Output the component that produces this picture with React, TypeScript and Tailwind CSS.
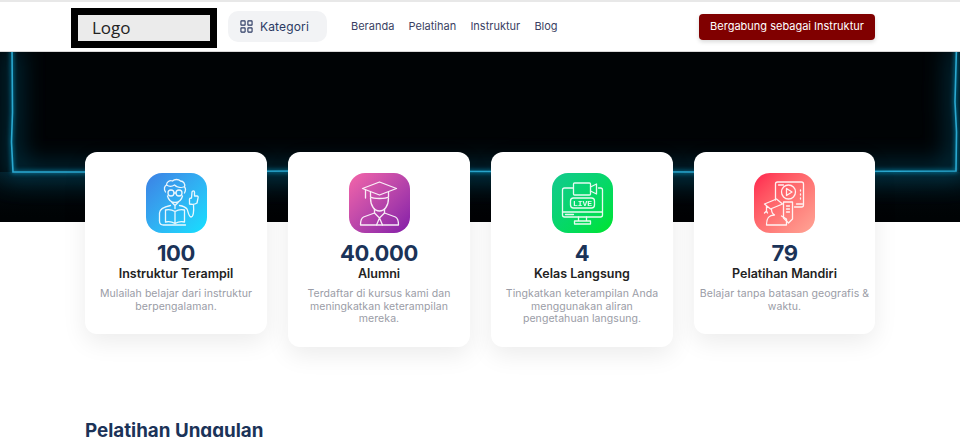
import React from "react";

const font = { fontFamily: "Inter, 'Open Sans', sans-serif" };

function Teacher() {
  return (
    <svg viewBox="0 0 60 60" className="w-[61px] h-[60px] opacity-90" fill="none" stroke="white" strokeWidth="1.3" strokeLinecap="round" strokeLinejoin="round">
      <path d="M19 19c-2-3-1-6 1-7 0-3 3-5 6-4 2-2 6-2 8 0 3 0 5 3 4 6 2 2 1 4 0 6" />
      <path d="M20 12c3 2 5 2 8 0 2 2 6 3 9 2" />
      <circle cx="24.500" cy="20" r="3" />
      <circle cx="32.500" cy="20" r="3" />
      <path d="M27.500 20h2M21 23c1 4 4 6.500 7.500 6.500s6.500-2.500 7.500-6.500" />
      <path d="M25.500 29.500l3 3 3-3M28.500 32.500v3" />
      <path d="M13 48v-8c0-4 4-6 11-7.500M33 32.500c3 .5 6 1.500 7.500 3.500 1 1.500 1.500 8 4 8 2.500 0 3-6 2.500-12" />
      <path d="M19 37c4-1 7 0 9.500 1.500 2.500-1.500 5.500-2.500 9.500-1.500v12c-4-1-7 0-9.500 1.500-2.500-1.500-5.500-2.500-9.500-1.500zM28.500 38.500v12" />
      <path d="M13 48c0 3 1 4 4 4h22" />
      <path d="M43 31v-5c0-1 1-1 2-1l.5-6c.3-1.500 2.500-1.500 2.500 0v4h2.500c1 0 1.500 1 1 2l-1 5c-2 1.500-5 1.500-7.500 1z" />
    </svg>
  );
}

function Graduate() {
  return (
    <svg viewBox="0 0 60 60" className="w-[61px] h-[60px] opacity-90" fill="none" stroke="white" strokeWidth="1.3" strokeLinecap="round" strokeLinejoin="round">
      <path d="M30 9l17 6.500-17 6.500-17-6.500z" />
      <path d="M21 19v5c3 2 15 2 18 0v-5" />
      <path d="M16 17v8" />
      <path d="M21 25c0 8 4 13 9 13s9-5 9-13" />
      <path d="M25 36v4l-11 4c-2 1-3 3-3 8h38c0-5-1-7-3-8l-11-4v-4" />
      <path d="M25 40l5 5 5-5M27 52l3-7 3 7" />
    </svg>
  );
}

function Live() {
  return (
    <svg viewBox="0 0 60 60" className="w-[61px] h-[60px] opacity-90" fill="none" stroke="white" strokeWidth="1.3" strokeLinecap="round" strokeLinejoin="round">
      <path d="M21 15h-9c-1 0-2 1-2 2v25c0 1 1 2 2 2h36c1 0 2-1 2-2v-25c0-1-1-2-2-2h-2" />
      <path d="M10 39h40M13 41.500h8" />
      <rect x="21" y="10" width="17" height="12" rx="1" />
      <path d="M38 14l6-3v10l-6-3" />
      <rect x="18" y="25" width="24" height="10" rx="3" />
      <text x="30" y="33" textAnchor="middle" fontSize="8" fontWeight="700" stroke="none" fill="white" style={{ fontFamily: "'Liberation Mono', monospace" }}>LIVE</text>
      <path d="M26 44v4h8v-4M22 51h16v-3h-16z" />
    </svg>
  );
}

function SelfPaced() {
  return (
    <svg viewBox="0 0 60 60" className="w-[61px] h-[60px] opacity-90" fill="none" stroke="white" strokeWidth="1.3" strokeLinecap="round" strokeLinejoin="round">
      <path d="M21 27v-16c0-1 1-2 2-2h24c1 0 2 1 2 2v21c0 1-1 2-2 2h-7" />
      <path d="M24 12h5M42 31h6M46 17v1M46 21v1M46 25v1" />
      <circle cx="34" cy="19" r="7" />
      <path d="M32 15.500v7l5.500-3.500z" />
      <path d="M10 31l12-5 6 5-12 5zM12 33v6M10 40l2-2 1 2" />
      <path d="M17 36c0 3 1 5 3 6-5 0-8 2-8 10h20v-6l-5-3" />
      <path d="M29 29h9v17l-4 4-5-5z" />
      <path d="M32 33h3M32 36h3M32 39h3" />
    </svg>
  );
}

const stats = [
  { n: "100", t: "Instruktur Terampil", d: "Mulailah belajar dari instruktur berpengalaman.", g: "bg-gradient-to-br from-[#3c80e4] to-[#0fe0ff]", I: Teacher, w: "w-[182px]" },
  { n: "40.000", t: "Alumni", d: "Terdaftar di kursus kami dan meningkatkan keterampilan mereka.", g: "bg-gradient-to-br from-[#f565a8] to-[#8419a8]", I: Graduate, w: "w-[182px]" },
  { n: "4", t: "Kelas Langsung", d: "Tingkatkan keterampilan Anda menggunakan aliran pengetahuan langsung.", g: "bg-gradient-to-br from-[#14c98e] to-[#00e426]", I: Live, w: "w-[182px]" },
  { n: "79", t: "Pelatihan Mandiri", d: "Belajar tanpa batasan geografis & waktu.", g: "bg-gradient-to-br from-[#ff1a4e] to-[#ffa596]", I: SelfPaced, w: "w-[181px]" },
];

const line = "M12 -5 L12.500 60 L11.500 90 L13 120 L82 120 L300 119 L700 120 L956 119 L956.500 80 L955 50 L956.500 -5";

function Neon() {
  return (
    <svg className="absolute inset-0 w-full h-full" viewBox="0 0 960 170" preserveAspectRatio="none" fill="none">
      <defs>
        <filter id="wide" x="-20%" y="-40%" width="140%" height="180%"><feGaussianBlur stdDeviation="12" /></filter>
        <filter id="mid" x="-20%" y="-20%" width="140%" height="140%"><feGaussianBlur stdDeviation="2" /></filter>
        <linearGradient id="lower" x1="0" y1="0" x2="0" y2="1">
          <stop offset="0" stopColor="#083040" stopOpacity="0.45" />
          <stop offset="1" stopColor="#000" stopOpacity="0" />
        </linearGradient>
      </defs>
      <rect x="0" y="120" width="960" height="50" fill="url(#lower)" />
      <path d={line} stroke="#0c6485" strokeWidth="14" opacity="0.55" filter="url(#wide)" />
      <path d={line} stroke="#0f86ad" strokeWidth="3" opacity="0.85" filter="url(#mid)" />
      <path d={line} stroke="#2aa8d0" strokeWidth="1.600" />
    </svg>
  );
}

export default function App() {
  return (
    <div className="w-[960px] h-[437px] overflow-hidden bg-white" style={font}>
      <div className="h-[2px] bg-[#e8e8e8]" />
      <header className="h-[50px] bg-white border-b border-[#d9d9d9] flex items-center pl-[71px] pr-[85px]">
        <div className="w-[146px] h-[40px] mt-[2px] border-[7px] border-black bg-[#ebebeb] flex items-center pl-[14px] text-[17px] text-[#222] leading-none" style={{ fontFamily: "'Open Sans', sans-serif" }}>
          Logo
        </div>
        <div className="ml-[11px] w-[99px] h-[31px] rounded-[10px] bg-[#f2f3f5] flex items-center pl-[12px] gap-[7px] text-[12px] text-[#2b3a63] tracking-[0.15px]">
          <svg viewBox="0 0 14 14" className="w-[13px] h-[13px]" fill="none" stroke="#2b3a63" strokeWidth="1.2">
            <rect x="1" y="1" width="4.500" height="4.500" rx="0.5" />
            <rect x="8.500" y="1" width="4.500" height="4.500" rx="0.5" />
            <rect x="1" y="8.500" width="4.500" height="4.500" rx="0.5" />
            <rect x="8.500" y="8.500" width="4.500" height="4.500" rx="0.5" />
          </svg>
          Kategori
        </div>
        <nav className="ml-[24px] flex gap-[14.200px] text-[11px] text-[#3a3f63]">
          <span>Beranda</span>
          <span>Pelatihan</span>
          <span>Instruktur</span>
          <span>Blog</span>
        </nav>
        <button className="ml-auto w-[176px] h-[26px] rounded-[4px] bg-[#800000] text-white text-[11px] shadow-[0_2px_4px_rgba(0,0,0,0.15)]">
          Bergabung sebagai Instruktur
        </button>
      </header>
      <section className="relative h-[170px] bg-[#000305] overflow-hidden">
        <Neon />
      </section>
      <div className="relative -mt-[70px] ml-[85px] flex items-start gap-[21px]">
        {stats.map(({ n, t, d, g, I, w }) => (
          <div key={t} className={`${w} bg-white rounded-[12px] shadow-[0_8px_24px_rgba(0,0,0,0.08)] pt-[21px] pb-[21px] px-[5px] flex flex-col items-center text-center`}>
            <div className={`w-[61px] h-[60px] rounded-[16px] flex items-center justify-center ${g}`}>
              <I />
            </div>
            <div className="mt-[7px] text-[22px] leading-[26px] font-bold text-[#1b3358] tracking-[-0.4px]">{n}</div>
            <div className="text-[12.500px] leading-[16px] font-semibold text-[#222222]">{t}</div>
            <p className="mt-[6px] text-[10.500px] leading-[12.700px] text-[#9a9ca6] tracking-[0.07px] max-w-[170px]">{d}</p>
          </div>
        ))}
      </div>
      <h2 className="ml-[85px] mt-[72px] text-[18.800px] leading-[24px] font-bold text-[#1b3358]">Pelatihan Unggulan</h2>
    </div>
  );
}
